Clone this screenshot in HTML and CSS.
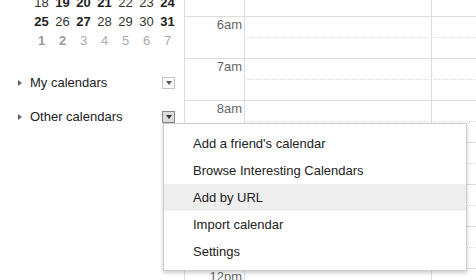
FILE: index.html
```html
<!DOCTYPE html>
<html lang="en">
<head>
    <meta charset="UTF-8">
    <title>Calendar</title>
    <link rel="stylesheet" href="styles.css">
</head>
<body>
    <div class="page">
        <aside class="sidebar">
            <table class="minical">
                <tr><td>18</td><td class="b">19</td><td class="b">20</td><td class="b">21</td><td>22</td><td>23</td><td class="b">24</td></tr>
                <tr><td class="b">25</td><td>26</td><td class="b">27</td><td>28</td><td>29</td><td>30</td><td class="b">31</td></tr>
                <tr class="next"><td class="b">1</td><td class="b">2</td><td>3</td><td>4</td><td>5</td><td>6</td><td>7</td></tr>
            </table>

            <div class="cal-list">
                <div class="cal-row">
                    <span class="tri"></span>
                    <span class="cal-name">My calendars</span>
                    <span class="drop"></span>
                </div>
                <div class="cal-row">
                    <span class="tri"></span>
                    <span class="cal-name">Other calendars</span>
                    <span class="drop-wrap">
                        <span class="drop active"></span>
                        <div class="menu">
                            <div class="menu-item">Add a friend's calendar</div>
                            <div class="menu-item">Browse Interesting Calendars</div>
                            <div class="menu-item hover">Add by URL</div>
                            <div class="menu-item">Import calendar</div>
                            <div class="menu-item">Settings</div>
                        </div>
                    </span>
                </div>
            </div>
        </aside>

        <main class="grid">
            <div class="hour"><div class="label">5am</div><div class="day"><div class="half"></div></div><div class="day"><div class="half"></div></div></div>
            <div class="hour"><div class="label">6am</div><div class="day"><div class="half"></div></div><div class="day"><div class="half"></div></div></div>
            <div class="hour"><div class="label">7am</div><div class="day"><div class="half"></div></div><div class="day"><div class="half"></div></div></div>
            <div class="hour"><div class="label">8am</div><div class="day"><div class="half"></div></div><div class="day"><div class="half"></div></div></div>
            <div class="hour"><div class="label">9am</div><div class="day"><div class="half"></div></div><div class="day"><div class="half"></div></div></div>
            <div class="hour"><div class="label">10am</div><div class="day"><div class="half"></div></div><div class="day"><div class="half"></div></div></div>
            <div class="hour"><div class="label">11am</div><div class="day"><div class="half"></div></div><div class="day"><div class="half"></div></div></div>
            <div class="hour"><div class="label">12pm</div><div class="day"><div class="half"></div></div><div class="day"><div class="half"></div></div></div>
        </main>
    </div>
</body>
</html>
```

FILE: styles.css
```css
body {
    margin: 0;
    font-family: "Liberation Sans", Arial, sans-serif;
    font-size: 13px;
    color: #222;
    background: white;
    overflow: hidden;
}

.page {
    display: flex;
    height: 280px;
    overflow: hidden;
}

.sidebar {
    width: 184px;
    flex-shrink: 0;
}

/* mini month */
.minical {
    border-collapse: collapse;
    margin: -7px 0 0 31px;
}

.minical td {
    width: 21px;
    height: 19px;
    padding: 0;
    text-align: center;
    color: #333;
}

.minical td.b {
    font-weight: bold;
    color: #222;
}

.minical .next td {
    color: #aaa;
}

.minical .next td.b {
    color: #999;
}

/* calendar list */
.cal-list {
    margin-top: 15px;
}

.cal-row {
    display: flex;
    align-items: center;
    height: 34px;
    padding-left: 18px;
}

.tri {
    width: 0;
    height: 0;
    border-left: 4px solid #666;
    border-top: 3px solid transparent;
    border-bottom: 3px solid transparent;
    margin: 2px 8px 0 0;
}

.cal-name {
    flex: 1;
}

.drop-wrap {
    position: relative;
    display: flex;
    margin-right: 9px;
}

.cal-row > .drop {
    margin-right: 9px;
}

.drop {
    width: 11px;
    height: 10px;
    border: 1px solid #c4c4c4;
    background: #fafafa;
    display: flex;
    align-items: center;
    justify-content: center;
    margin-top: 2px;
}

.drop::after {
    content: "";
    border-top: 4px solid #555;
    border-left: 3.5px solid transparent;
    border-right: 3.5px solid transparent;
}

.drop.active {
    border-color: #888;
    background: #dcdcdc;
}

.drop.active::after {
    border-top-color: #333;
}

.menu {
    position: absolute;
    top: 100%;
    left: 1px;
    width: 302px;
    padding: 6px 0 5px;
    background: white;
    border: 1px solid rgba(0,0,0,0.2);
    box-shadow: 0 2px 4px rgba(0,0,0,0.2);
    z-index: 10;
}

.menu-item {
    height: 27px;
    line-height: 27px;
    padding-left: 29px;
    color: #222;
    white-space: nowrap;
}

.menu-item.hover {
    background: #eee;
}

/* time grid */
.grid {
    flex: 1;
    border-left: 1px solid #ddd;
    margin-top: -26px;
}

.hour {
    display: flex;
    height: 41px;
    border-top: 1px solid #ddd;
}

.label {
    width: 57px;
    padding-right: 2px;
    text-align: right;
    color: #666;
    line-height: 15px;
}

.day {
    width: 186px;
    border-left: 1px solid #ddd;
}

.day:last-child {
    flex: 1;
}

.half {
    height: 20px;
    margin: 0 2px;
    border-bottom: 1px dotted #ddd;
}
```
